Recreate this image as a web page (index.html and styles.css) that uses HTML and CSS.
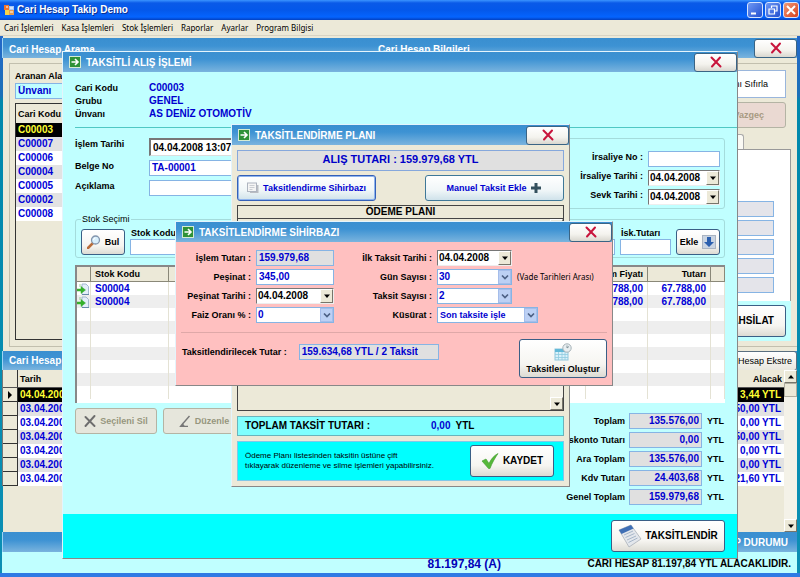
FILE: index.html
```html
<!DOCTYPE html>
<html lang="tr">
<head>
<meta charset="utf-8">
<title>Cari Hesap Takip Demo</title>
<link rel="stylesheet" href="styles.css">
</head>
<body>
<svg class="defs" aria-hidden="true">
  <symbol id="cross" viewBox="0 0 12 12"><path d="M1.5 1.5L10.5 10.5M10 1.5L2 10.5" fill="none" stroke="#c8143c" stroke-width="2" stroke-linecap="round"/></symbol>
  <symbol id="go" viewBox="0 0 12 12"><rect x=".5" y=".5" width="11" height="11" fill="#2f9238" stroke="#d4ecd4"/><path d="M2.5 6H9M6 3l3 3-3 3" fill="none" stroke="#fff" stroke-width="1.6"/></symbol>
  <symbol id="tri" viewBox="0 0 8 8"><path d="M1 2.5h6L4 6z" fill="#000"/></symbol>
  <symbol id="tri-up" viewBox="0 0 8 8"><path d="M1 5.5h6L4 2z" fill="#000"/></symbol>
  <symbol id="chev" viewBox="0 0 8 8"><path d="M1 2.5l3 3 3-3" fill="none" stroke="#4d6185" stroke-width="1.7"/></symbol>
  <symbol id="entry" viewBox="0 0 12 12"><path d="M5 1h4l2.5 2.5v8H5z" fill="#e4eefa" stroke="#8fa9c6" stroke-width=".8"/><path d="M5 11.500h7" stroke="#6688a8"/><path d="M3 1v3M0 6h4V3.500L8.500 7 4 10.500V8H0z" fill="#35b02c" stroke="#35b02c" stroke-width=".5"/></symbol>
</svg>
<div class="app">
  <header class="app-title">
    <svg class="app-logo" viewBox="0 0 12 12"><rect x="1" y="1" width="5" height="5" fill="#f2752e"/><rect x="6" y="2" width="5" height="4" fill="#a8c8f4"/><rect x="2" y="6" width="4" height="5" fill="#f6d34b"/><rect x="6" y="6" width="5" height="5" fill="#e69c50"/><path d="M3 3h2M7 4h3M7 8h3" stroke="#fff"/></svg>
    <h1>Cari Hesap Takip Demo</h1>
    <button class="sys" aria-label="Simge durumuna küçült"><svg viewBox="0 0 14 14"><path d="M3 10.500h5" stroke="#fff" stroke-width="2"/></svg></button>
    <button class="sys" aria-label="Önceki boyut"><svg viewBox="0 0 14 14"><path d="M5.500 5V3h5.500v5H9M3 6h5.500v5H3z" fill="none" stroke="#fff" stroke-width="1.200"/></svg></button>
    <button class="sys sys-close" aria-label="Kapat"><svg viewBox="0 0 14 14"><path d="M3 3l8 8M11 3l-8 8" stroke="#fff" stroke-width="2"/></svg></button>
  </header>
  <nav class="menu">
    <a href="#">Cari İşlemleri</a><a href="#">Kasa İşlemleri</a><a href="#">Stok İşlemleri</a><a href="#">Raporlar</a><a href="#">Ayarlar</a><a href="#">Program Bilgisi</a>
  </nav>

  <main class="workspace">
    <div class="heads heads-top">
      <h2>Cari Hesap Arama</h2><h2>Cari Hesap Bilgileri</h2>
      <button class="close" aria-label="Kapat"><svg><use href="#cross"/></svg></button>
    </div>
    <div class="panels">
      <section class="search">
        <label for="alan">Aranan Alan</label>
        <select id="alan" class="field"><option>Ünvanı</option></select>
        <div class="account-box">
          <table class="accounts">
            <thead><tr><th>Cari Kodu</th></tr></thead>
            <tbody>
              <tr class="sel"><td>C00003</td></tr><tr><td>C00007</td></tr><tr><td>C00006</td></tr><tr><td>C00004</td></tr><tr><td>C00005</td></tr><tr><td>C00002</td></tr><tr><td>C00008</td></tr>
            </tbody>
          </table>
        </div>
      </section>
      <section class="details">
        <button class="reset">Aramanı Sıfırla</button>
        <button class="btn cancel" disabled>Vazgeç</button>
        <div class="tab"></div>
        <div class="sheet">
          <input class="field" aria-label="Alan 1" readonly><input class="field" aria-label="Alan 2" readonly><input class="field" aria-label="Alan 3" readonly><input class="field" aria-label="Alan 4" readonly><input class="field" aria-label="Alan 5" readonly>
        </div>
        <div class="collect"><button class="btn big">TAHSİLAT</button></div>
      </section>
    </div>
    <div class="heads heads-moves">
      <h2>Cari Hesap Hareketleri</h2>
      <button class="extract">Hesap Ekstre</button>
    </div>
    <div class="moves">
      <table>
        <colgroup><col class="c-mark"><col><col></colgroup>
        <thead><tr><th></th><th>Tarih</th><th class="num">Alacak</th></tr></thead>
        <tbody>
          <tr class="sel"><th><svg class="mark" viewBox="0 0 6 8"><path d="M1 0l4 4-4 4z"/></svg></th><td>04.04.2008</td><td class="num">3,44 YTL</td></tr>
          <tr><th></th><td>03.04.2008</td><td class="num">50,00 YTL</td></tr>
          <tr><th></th><td>03.04.2008</td><td class="num">0,00 YTL</td></tr>
          <tr><th></th><td>03.04.2008</td><td class="num">50,00 YTL</td></tr>
          <tr><th></th><td>03.04.2008</td><td class="num">0,00 YTL</td></tr>
          <tr><th></th><td>03.04.2008</td><td class="num">0,00 YTL</td></tr>
          <tr><th></th><td>03.04.2008</td><td class="num">21,60 YTL</td></tr>
        </tbody>
      </table>
      <div class="scroll"><span><svg><use href="#tri-up"/></svg></span><i></i><span><svg><use href="#tri"/></svg></span></div>
    </div>
    <div class="heads heads-status"><h2>HESAP DURUMU</h2></div>
    <footer class="status"><strong>81.197,84 (A)</strong><span>CARİ HESAP 81.197,84 YTL ALACAKLIDIR.</span></footer>
  </main>

  <section class="win purchase">
    <header class="win-title"><svg class="go"><use href="#go"/></svg><h2>TAKSİTLİ ALIŞ İŞLEMİ</h2><button class="close" aria-label="Kapat"><svg><use href="#cross"/></svg></button></header>
    <dl class="account"><dt>Cari Kodu</dt><dd>C00003</dd><dt>Grubu</dt><dd>GENEL</dd><dt>Ünvanı</dt><dd>AS DENİZ OTOMOTİV</dd></dl>
    <div class="purchase-body">
      <div class="head-form">
        <div class="doc">
          <label for="islem">İşlem Tarihi</label><input id="islem" class="field sunken" value="04.04.2008 13:07">
          <label for="belge">Belge No</label><input id="belge" class="field" value="TA-00001">
          <label for="aciklama">Açıklama</label><input id="aciklama" class="field">
        </div>
        <div class="dispatch">
          <label for="irs">İrsaliye No :</label><input id="irs" class="field">
          <label for="irst">İrsaliye Tarihi :</label><span class="combo date"><select id="irst"><option>04.04.2008</option></select><span><svg><use href="#tri"/></svg></span></span>
          <label for="sevk">Sevk Tarihi :</label><span class="combo date"><select id="sevk"><option>04.04.2008</option></select><span><svg><use href="#tri"/></svg></span></span>
        </div>
      </div>
      <fieldset class="stock">
        <legend>Stok Seçimi</legend>
        <button class="btn"><svg class="i14" viewBox="0 0 14 14"><path d="M1 13l5-5" stroke="#b86d3c" stroke-width="2.500" stroke-linecap="round"/><circle cx="8.500" cy="5" r="4" fill="#d8effc" stroke="#8295ad" stroke-width="1.300"/><path d="M6.500 5a2 2 0 0 1 2-2" stroke="#fff" fill="none"/></svg>Bul</button>
        <div class="stack code"><label for="stok">Stok Kodu</label><input id="stok" class="field"></div>
        <div class="stack disc"><label for="isk">İsk.Tutarı</label><input id="isk" class="field"></div>
        <button class="btn">Ekle<svg class="i14" viewBox="0 0 14 14"><rect x=".5" y=".5" width="13" height="13" fill="#c9d4e2" stroke="#aab4c2"/><path d="M5 2h4v5h3l-5 5-5-5h3z" fill="#2b5fae"/></svg></button>
      </fieldset>
      <div class="items">
        <table>
          <colgroup><col class="c-icon"><col class="c-code"><col><col class="c-price"><col class="c-sum"><col class="c-icon"></colgroup>
          <thead><tr><th></th><th>Stok Kodu</th><th></th><th class="num">Birim Fiyatı</th><th class="num">Tutarı</th><th></th></tr></thead>
          <tbody>
            <tr><td><svg><use href="#entry"/></svg></td><td>S00004</td><td></td><td class="num">67.788,00</td><td class="num">67.788,00</td><td></td></tr>
            <tr><td><svg><use href="#entry"/></svg></td><td>S00004</td><td></td><td class="num">67.788,00</td><td class="num">67.788,00</td><td></td></tr>
            <tr><td></td><td></td><td></td><td></td><td></td><td></td></tr>
            <tr><td></td><td></td><td></td><td></td><td></td><td></td></tr>
            <tr><td></td><td></td><td></td><td></td><td></td><td></td></tr>
            <tr><td></td><td></td><td></td><td></td><td></td><td></td></tr>
            <tr><td></td><td></td><td></td><td></td><td></td><td></td></tr>
            <tr><td></td><td></td><td></td><td></td><td></td><td></td></tr>
            <tr><td></td><td></td><td></td><td></td><td></td><td></td></tr>
          </tbody>
        </table>
      </div>
      <div class="below">
        <button class="btn wide" disabled><svg class="i12" viewBox="0 0 12 12"><path d="M1.500 2l9 9M10.500 1l-9 10" stroke="#6e6e6e" stroke-width="1.900" stroke-linecap="round"/></svg>Seçileni Sil</button>
        <button class="btn wide" disabled><svg class="i12" viewBox="0 0 12 12"><path d="M10.500 1L3.500 9M1 11.500h8M3.500 9L1.500 11.500l3-1z" stroke="#777" stroke-width="1.400" fill="none"/></svg>Düzenle</button>
        <div class="totals">
          <label for="t1">Toplam</label><input id="t1" class="field ro" readonly value="135.576,00"><span>YTL</span>
          <label for="t2">İskonto Tutarı</label><input id="t2" class="field ro" readonly value="0,00"><span>YTL</span>
          <label for="t3">Ara Toplam</label><input id="t3" class="field ro" readonly value="135.576,00"><span>YTL</span>
          <label for="t4">Kdv Tutarı</label><input id="t4" class="field ro" readonly value="24.403,68"><span>YTL</span>
          <label for="t5">Genel Toplam</label><input id="t5" class="field ro" readonly value="159.979,68"><span>YTL</span>
        </div>
      </div>
    </div>
    <footer class="win-foot"><button class="btn big"><svg class="i24" viewBox="0 0 24 24"><path d="M1 6L13 1l10 14-12 8z" fill="#e3e7ec" stroke="#a9b0b8" stroke-width=".8"/><path d="M1 6L13 1l2.500 3.500L3.500 10z" fill="#3f6fb5"/><path d="M6 11l9-4M7.500 13.500l9-4M9 16l9-4M10.500 18.500l9-4.500" stroke="#9fb0c4" stroke-width=".9"/></svg>TAKSİTLENDİR</button></footer>
  </section>

  <section class="win plan">
    <header class="win-title"><svg class="go"><use href="#go"/></svg><h2>TAKSİTLENDİRME PLANI</h2><button class="close" aria-label="Kapat"><svg><use href="#cross"/></svg></button></header>
    <div class="plan-body">
      <p class="amount">ALIŞ TUTARI : 159.979,68 YTL</p>
      <div class="plan-actions">
        <button class="btn blue focus"><svg class="i12" viewBox="0 0 12 12"><rect x="3" y="3" width="8.500" height="8" fill="#b9bcc2"/><rect x=".5" y="1" width="9" height="8.500" fill="#f5f5f5" stroke="#aeb4bf"/><path d="M2.500 3.500h5M2.500 5.500h5M2.500 7.500h3" stroke="#c0c4ca" stroke-width=".8"/></svg>Taksitlendirme Sihirbazı</button>
        <button class="btn blue">Manuel Taksit Ekle<svg class="i12" viewBox="0 0 12 12"><path d="M6 1v10M1 6h10" stroke="#34505e" stroke-width="3"/></svg></button>
      </div>
      <div class="list">
        <h3>ÖDEME PLANI</h3>
        <div class="scroll"><span><svg><use href="#tri-up"/></svg></span><i></i><span><svg><use href="#tri"/></svg></span></div>
      </div>
      <div class="plan-total"><span>TOPLAM TAKSİT TUTARI :</span><b>0,00</b><span>YTL</span></div>
      <div class="plan-save"><p>Ödeme Planı listesinden taksitin üstüne çift<br>tıklayarak düzenleme ve silme işlemleri yapabilirsiniz.</p><button class="btn big"><svg class="i18" viewBox="0 0 18 18"><path d="M1 9l4-2 3 4.500C10 7 13 3.500 17 1.500 14 6 11 11 9 16.500H7.500z" fill="#56b83a" stroke="#3e9a2c" stroke-width=".6"/></svg>KAYDET</button></div>
    </div>
  </section>

  <section class="win wizard">
    <header class="win-title"><svg class="go"><use href="#go"/></svg><h2>TAKSİTLENDİRME SİHİRBAZI</h2><button class="close" aria-label="Kapat"><svg><use href="#cross"/></svg></button></header>
    <form class="wizard-form">
      <label for="w1">İşlem Tutarı :</label><input id="w1" class="field ro" readonly value="159.979,68">
      <label for="w2">İlk Taksit Tarihi :</label><span class="combo date"><select id="w2"><option>04.04.2008</option></select><span><svg><use href="#tri"/></svg></span></span><i></i>
      <label for="w3">Peşinat :</label><input id="w3" class="field" value="345,00">
      <label for="w4">Gün Sayısı :</label><span class="combo"><select id="w4"><option>30</option></select><span><svg><use href="#chev"/></svg></span></span><small>(Vade Tarihleri Arası)</small>
      <label for="w5">Peşinat Tarihi :</label><span class="combo date"><select id="w5"><option>04.04.2008</option></select><span><svg><use href="#tri"/></svg></span></span>
      <label for="w6">Taksit Sayısı :</label><span class="combo"><select id="w6"><option>2</option></select><span><svg><use href="#chev"/></svg></span></span><i></i>
      <label for="w7">Faiz Oranı % :</label><span class="combo"><select id="w7"><option>0</option></select><span><svg><use href="#chev"/></svg></span></span>
      <label for="w8">Küsürat :</label><span class="combo span small"><select id="w8"><option>Son taksite işle</option></select><span><svg><use href="#chev"/></svg></span></span>
    </form>
    <div class="wizard-foot">
      <div class="result"><label for="w9">Taksitlendirilecek Tutar :</label><input id="w9" class="field ro" readonly value="159.634,68 YTL / 2 Taksit"></div>
      <button class="btn create"><svg class="i18" viewBox="0 0 18 18"><rect x="1" y="6" width="13" height="11" fill="#d9f1fa" stroke="#8fc6dc"/><path d="M1 7.500h13" stroke="#63b9d8" stroke-width="3"/><path d="M4.500 9v8M8 9v8M11 9v8M1 11.500h13M1 14.500h13" stroke="#90cbe0" stroke-width=".8"/><circle cx="13" cy="5" r="4.200" fill="#e8eef0" stroke="#a6b2b8"/><path d="M13 5V2.500M13 5l2-1.500" stroke="#798a92" stroke-width=".9"/></svg>Taksitleri Oluştur</button>
    </div>
  </section>
</div>
</body>
</html>
```
FILE: styles.css
```css
* { box-sizing: border-box; }
body { margin: 0; font: bold 9px/12px "Liberation Sans", Arial, sans-serif; color: #000; }
h1, h2, h3, p, dl, dd { margin: 0; font: inherit; }
button, input, select { font: inherit; color: inherit; margin: 0; padding: 0; border-radius: 0; min-width: 0; }
table { border-collapse: separate; border-spacing: 0; table-layout: fixed; width: 100%; }
td, th { padding: 0; }
.defs { display: none; }
svg { display: block; flex: none; }
.i12 { width: 12px; height: 12px; }
.i14 { width: 14px; height: 14px; }
.i18 { width: 18px; height: 18px; }
.i24 { width: 24px; height: 24px; }

.app { position: relative; display: flex; flex-direction: column; min-height: 100vh; overflow: hidden; background: #ece9d8; }
.app-title { display: flex; align-items: center; gap: 2px; height: 20px; padding: 0 1px 0 3px; background: linear-gradient(#3b94ff, #0a5ae8 15%, #0458ea 50%, #0464ff 85%, #0340c0); color: #fff; }
.app-title h1 { flex: 1; font-size: 10px; text-shadow: 1px 1px #0a2f90; }
.app-logo { width: 12px; height: 12px; }
.sys { width: 16px; height: 16px; border: 1px solid #d6e4ff; border-radius: 3px; background: linear-gradient(135deg, #6f98f4, #2350d0); }
.sys svg { width: 14px; height: 14px; }
.sys-close { background: linear-gradient(135deg, #f09a78, #d8401c); }
.menu { display: flex; align-items: center; gap: 8px; height: 16px; padding: 0 4px; border-bottom: 1px solid #d8d4c4; font: 8px/12px "Noto Sans", sans-serif; }
.menu a { color: #000; text-decoration: none; }

.workspace { flex: 1; display: flex; flex-direction: column; padding: 2px 3px 0 2px; border-bottom: 4px solid #2f7ae4; background: linear-gradient(90deg, #ece9d8 0 0) 3px 0 / calc(100% - 6px) 100% no-repeat, linear-gradient(#2468c8, #1c70b8 60px, #0088ac 65px, #0b8fb4); }
.heads { display: flex; align-items: center; height: 20px; flex: none; padding-left: 6px; border-left: 1px solid #9cd4f4; color: #fff; background: linear-gradient(#3a8fd0, #3d92d3 40%, #7ab4de); }
.heads h2 { flex: 0 0 369px; font-size: 10px; }
.heads-top h2 { padding-top: 3px; }
.heads .close { margin-left: auto; }
.close { display: grid; place-items: center; width: 43px; height: 19px; flex: none; border: 1px solid #3a6484; border-radius: 3px; background: linear-gradient(#fff, #f4f3ee 60%, #d9d7cf); }
.close svg { width: 12px; height: 12px; }
.panels { display: flex; height: 289px; padding: 5px 0 0 7px; gap: 4px; }
.search { display: flex; flex-direction: column; width: 360px; height: 284px; padding: 6px 5px; border: 1px solid #c2bfae; }
.search .field { margin: 1px 0 4px; height: 16px; background: #c0ffff; }
.account-box { flex: 1; border: 1px solid #333; background: #ece9d8; }
.accounts th { height: 19px; padding-left: 2px; text-align: left; background: #ece9d8; }
.accounts td { height: 14px; padding-left: 2px; }
td { font-size: 10px; line-height: 12px; color: #0000d8; background: #fff; }
.accounts tbody tr:nth-child(even) td { background: #e2e2e2; }
.accounts .sel td, .moves .sel td { background: #000; color: #ff3; }
.details { flex: 1; display: flex; flex-direction: column; align-items: flex-end; height: 284px; padding: 6px 6px 5px; border: 1px solid #c2bfae; border-right: 0; }
.reset { width: 90px; height: 28px; margin-right: 5px; padding-right: 17px; text-align: right; border: 1px solid #9ab6dc; background: #fff; font-weight: normal; }
.btn.cancel { width: 90px; margin: 4px 5px 6px 0; padding-right: 21px; justify-content: flex-end; }
.tab { width: 100px; height: 15px; margin-right: 47px; border: 1px solid #aaa; border-bottom: 0; border-radius: 3px 3px 0 0; background: #fbfaf4; }
.sheet { display: flex; flex-direction: column; align-items: flex-end; gap: 3px; width: 100%; height: 152px; padding: 51px 16px 0 0; border: 1px solid #999; border-width: 1px 1px 0 0; background: #fff; }
.sheet .field { width: 120px; background: #e4e4ea; }
.collect { display: flex; justify-content: flex-end; width: 100%; height: 40px; padding: 4px 5px; background: #c0ffff; }
.collect .btn { width: 90px; padding-left: 18px; }
.heads-moves { margin-top: 4px; height: 19px; }
.heads-moves h2, .heads-status h2 { flex: none; }
.extract { margin-left: auto; width: 90px; height: 20px; border: 1px solid #5a6f80; border-radius: 3px; background: linear-gradient(#fff, #e8e6de); color: #000; font-weight: normal; text-align: right; padding-right: 4px; }
.moves { display: flex; flex: 1; }
.moves table { flex: 1; align-self: flex-start; border-left: 1px solid #777; }
.c-mark { width: 15px; }
.moves th { height: 14px; text-align: left; background: #ece9d8; border-right: 1px solid #333; border-bottom: 1px solid #333; }
.moves thead th { height: 18px; padding: 0 2px; border-bottom-color: #555; }
.moves thead th + th, .moves td + td { border-right: 0; }
.moves td { height: 14px; padding: 0 3px 0 2px; }
.moves tbody tr:nth-child(even) td { background: #e2e2e2; }
.moves th.num, .moves td.num, .num { text-align: right; }
.mark { width: 6px; height: 8px; margin: 0 auto; }
.scroll { display: flex; flex-direction: column; width: 13px; background: #f4f2e8; }
.scroll span { display: grid; place-items: center; height: 13px; border: 1px solid; border-color: #fff #77756a #77756a #fff; background: #ece9d8; }
.scroll i { flex: 1; }
.moves .scroll i::before { content: ""; display: block; height: 12px; border: 1px solid #b0ad9f; background: #ece9d8; }
.scroll svg, .combo svg { width: 8px; height: 8px; }
.heads-status { justify-content: flex-end; padding-right: 9px; }
.heads-status h2 { padding-top: 2px; }
.status { display: grid; grid-template-columns: 1fr auto 290px; align-items: center; height: 21px; padding: 2px 6px 0 0; background: #c0ffff; font-size: 10px; }
.status strong { grid-column: 2; font-size: 12px; color: #0000b8; padding-left: 130px; }
.status span { text-align: right; }

.field { width: 100%; height: 16px; padding: 0 2px 1px; border: 1px solid #86b4e4; background: #fff; color: #0000d0; font-size: 10px; line-height: 12px; appearance: none; outline: 0; }
.field.ro { background: #e0e0e0; }
.field.sunken { height: 18px; color: #000; border-color: #777 #ddd #ddd #777; border-width: 2px 1px 1px 2px; background: #fff; }
.combo { display: grid; grid-template-columns: 1fr 13px; height: 16px; border: 1px solid #86b4e4; background: #fff; color: #0000d0; }
.combo select { grid-area: 1 / 1 / 2 / 3; width: 100%; padding: 0 1px; border: 0; background: none; appearance: none; font-size: 10px; line-height: 12px; outline: 0; }
.combo > span { grid-area: 1 / 2; display: grid; place-items: center; background: #bcd0f4; border: 1px solid #a5bdea; pointer-events: none; }
.combo.date { color: #000; border-color: #777 #eee #eee #777; }
.combo.date > span { background: #ece9d8; border-color: #fff #77756a #77756a #fff; }
.combo.small select { font-size: 9px; padding-left: 2px; }
.btn { display: flex; align-items: center; justify-content: center; gap: 4px; height: 26px; flex: none; border: 1px solid #3a5f86; border-radius: 3px; background: linear-gradient(#fff, #f6f5f1 65%, #dddbd3); font-size: 9px; line-height: 12px; }
.btn:disabled { border-color: #b4b4a4; background: #e6e6dc; color: #96967e; }
.btn.cancel:disabled { background: #ead9d2; color: #a79a82; }
.btn.big { height: 32px; font-size: 10px; }

.win { position: absolute; display: flex; flex-direction: column; border: 1px solid; border-color: #e4f4fc #888 #888 #e4f4fc; }
.win-title { display: flex; align-items: center; gap: 5px; height: 20px; flex: none; padding-left: 6px; color: #fff; background: linear-gradient(#3a8fd0, #3d92d3 35%, #7ab4de); }
.win-title h2 { flex: 1; font-size: 10px; padding-top: 2px; }
.go { width: 12px; height: 12px; }

.purchase { top: 51px; left: 62px; right: 62px; height: 508px; background: #c0ffff; }
.account { display: grid; grid-template-columns: 74px 1fr; row-gap: 1px; margin-left: 12px; padding: 10px 0 7px; border-bottom: 1px solid #50c8c4; line-height: 12px; }
.account dd { color: #0000d0; font-size: 10px; }
.purchase-body { flex: 1; padding: 10px 12px 0; }
.head-form { display: flex; justify-content: space-between; height: 71px; }
.doc { display: grid; grid-template-columns: 74px 150px; row-gap: 4px; align-content: start; }
.dispatch { display: grid; grid-template-columns: 1fr 72px; gap: 3px 5px; align-content: start; width: 240px; padding: 12px 4px 0; border: 1px solid #a4dcdc; border-radius: 3px; text-align: right; }
.stock { display: flex; gap: 5px; align-items: flex-end; height: 45px; margin: 4px 0 7px; padding: 0 4px 2px 5px; border: 1px solid #a4dcdc; border-radius: 3px; }
.stock legend { padding: 0 1px; font-weight: normal; line-height: 12px; }
.stock .btn { width: 44px; }
.stack { display: flex; flex-direction: column; }
.code { flex: 1; }
.disc { width: 51px; }
.stock label { line-height: 11px; white-space: nowrap; padding-left: 1px; }
.items { height: 138px; border: 1px solid #888; border-width: 2px 0 0 2px; background: #fff; }
.c-icon { width: 14px; }
.c-code { width: 78px; }
.c-price { width: 62px; }
.c-sum { width: 63px; }
.items th { height: 15px; padding: 0 4px; text-align: left; background: #ece9d8; border-right: 1px solid #8a8878; border-bottom: 1px solid #8a8878; white-space: nowrap; overflow: hidden; }
.items th.num { text-align: right; }
.items td { height: 13px; padding: 0 4px; border-right: 1px solid #e4e2d4; line-height: 12px; }
.items td:first-child { padding: 0; }
.items td svg { width: 12px; height: 12px; }
.items tr:nth-child(even) td { background: #eee; }
.below { display: flex; align-items: flex-start; gap: 6px; padding-top: 5px; }
.btn.wide { width: 82px; }
.totals { display: grid; grid-template-columns: auto 73px 18px; gap: 3px 4px; align-items: center; margin: 5px 1px 0 auto; text-align: right; }
.totals .field { text-align: right; }
.win-foot { display: flex; justify-content: flex-end; height: 44px; padding: 6px 12px; background: #0ff; }
.win-foot .btn { width: 114px; gap: 3px; }

.plan { top: 124px; left: 231px; width: 339px; height: 363px; background: #ece9d8; }
.plan-body { display: flex; flex-direction: column; flex: 1; padding: 5px; }
.amount { height: 21px; line-height: 17px; border: 1px solid #86a8dc; background: #e0e0e0; color: #0000c8; font-size: 11px; text-align: center; }
.plan-actions { display: flex; justify-content: space-between; padding: 4px 0; }
.btn.blue { width: 139px; color: #0000d0; background: linear-gradient(#fff, #f0f6f8 60%, #cfe2ea); border-color: #3f7898; }
.btn.focus { border-color: #3460b8; box-shadow: inset 0 0 0 1px #8eb4ee; }
.list { display: flex; flex-direction: column; flex: 1; border: 1px solid #444; }
.list h3 { height: 13px; border-bottom: 1px solid #444; text-align: center; font-size: 10px; }
.list .scroll { flex: 1; align-self: flex-end; }
.plan-total { display: flex; align-items: center; height: 20px; margin: 5px 0; padding: 0 7px; border: 1px solid #6ab4bc; background: #80ffff; font-size: 10px; gap: 5px; }
.plan-total b { margin-left: 56px; color: #0000d0; }
.plan-save { display: flex; align-items: center; justify-content: space-between; height: 40px; padding: 0 9px 0 7px; border: 1px solid #80c8e8; background: #0ff; }
.plan-save p { font-size: 8px; font-weight: normal; line-height: 10px; white-space: nowrap; }
.plan-save .btn { width: 84px; }

.wizard { top: 221px; left: 175px; width: 438px; height: 165px; background: #ffc0c0; }
.wizard-form { display: grid; grid-template-columns: 70px 78px 93px 75px 1fr; gap: 3px 5px; align-items: center; margin: 0 5px; padding: 8px 0 9px; border-bottom: 1px solid #dfa8a8; text-align: right; white-space: nowrap; }
.wizard-form small { font: 8px/12px "Noto Sans", sans-serif; text-align: left; }
.wizard-form .span { grid-column: span 2; width: 101px; }
.wizard-foot { display: flex; justify-content: space-between; padding: 6px 5px 0 6px; }
.result { display: flex; align-items: center; gap: 12px; height: 26px; white-space: nowrap; }
.result .field { width: 140px; }
.btn.create { flex-direction: column; gap: 2px; width: 88px; height: 39px; }
```
